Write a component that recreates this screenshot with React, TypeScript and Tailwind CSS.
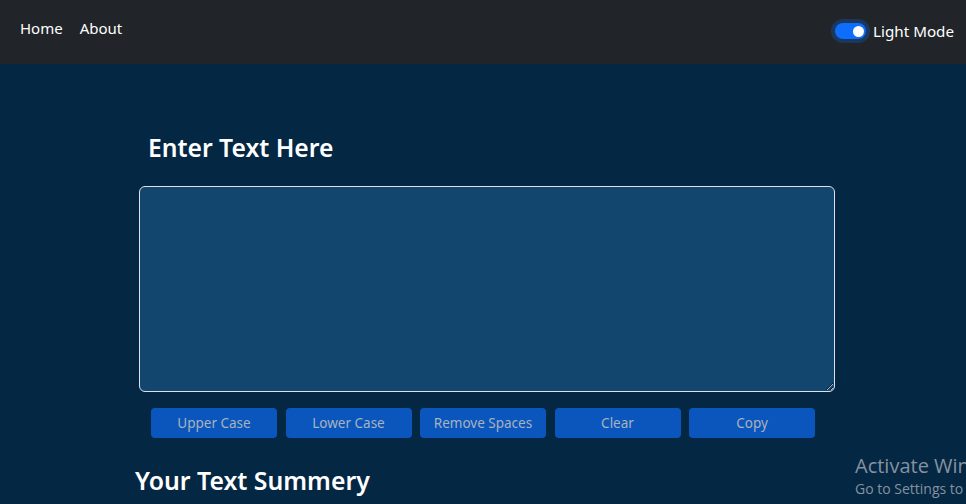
import React from "react";

export default function App() {
  const buttons = ["Upper Case", "Lower Case", "Remove Spaces", "Clear", "Copy"];
  return (
    <div
      className="relative h-[504px] w-[966px] overflow-hidden bg-[#042743] text-white"
      style={{ fontFamily: '"Noto Sans", "Open Sans", sans-serif' }}
    >
      <nav className="flex h-16 items-start justify-between bg-[#212529] pl-5 pr-3">
        <div className="flex gap-[17px] pt-[17px] text-[15px] leading-[22px]">
          <span>Home</span>
          <span>About</span>
        </div>
        <div className="flex items-center gap-[7px] pt-[20px]">
          <div className="flex h-4 w-[31px] items-center justify-end rounded-full bg-[#0d6efd] pr-[2px] shadow-[0_0_0_4px_rgba(13,110,253,0.25)]">
            <div className="h-[11px] w-[11px] rounded-full bg-white" />
          </div>
          <span className="text-[15.2px] leading-[22px]">Light Mode</span>
        </div>
      </nav>

      <main className="mx-auto w-[720px] px-3">
        <h1 className="ml-[13px] mt-[66px] text-[24.7px] font-semibold leading-[36px]">
          Enter Text Here
        </h1>
        <textarea
          className="ml-1 mt-[20px] block h-[206px] w-[696px] rounded-[6px] border border-[#dee2e6] bg-[#13466e] p-2 text-white outline-none"
          defaultValue=""
        />
        <div className="ml-4 mt-4 flex gap-[8.5px]">
          {buttons.map((b) => (
            <button
              key={b}
              className="h-[30px] w-[126px] rounded-[4px] bg-[#0b56bc] text-[13.5px] text-[#a7b3bf]"
            >
              {b}
            </button>
          ))}
        </div>
        <h2 className="mt-[24px] text-[24.8px] font-semibold leading-[36px]">
          Your Text Summery
        </h2>
      </main>

      <div className="absolute left-[855px] top-[453px] whitespace-nowrap text-[#8592a0]">
        <div className="text-[20px] leading-[26px]" style={{ fontFamily: '"Open Sans", sans-serif', fontWeight: 400 }}>
          Activate Windows
        </div>
        <div className="text-[14px] leading-[20px]" style={{ fontFamily: '"Open Sans", sans-serif' }}>
          Go to Settings to activate Windows.
        </div>
      </div>
    </div>
  );
}
